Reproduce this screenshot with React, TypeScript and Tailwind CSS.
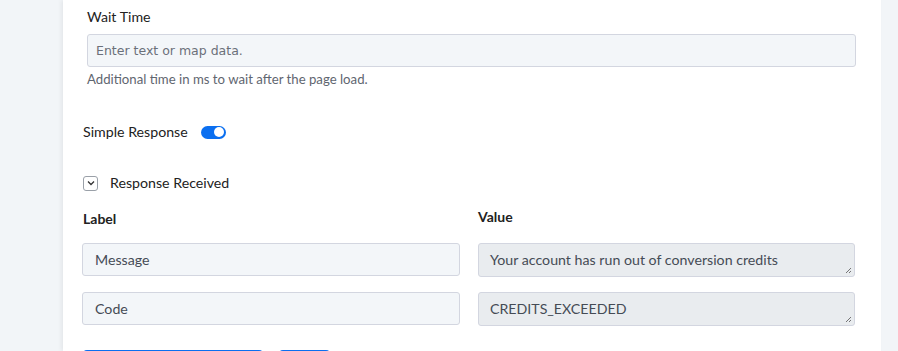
export default function App() {
  return (
    <div
      className="flex h-[351px] w-full overflow-hidden bg-[#f2f5f8]"
      style={{ fontFamily: "Lato, 'Open Sans', sans-serif" }}
    >
      <div className="ml-[63px] w-[818px] shrink-0 bg-white shadow-[-2px_0_4px_rgba(0,0,0,0.06)]">
        {/* Wait Time */}
        <div className="pl-[24px] pr-[25px] pt-[8px]">
          <div className="text-[14.2px] leading-[18px] text-[#222]">Wait Time</div>
          <input
            className="mt-[8px] block h-[33px] w-full rounded-[3px] border border-[#d3d6e0] bg-[#f3f6f9] px-[8px] text-[12.5px] text-[#555] placeholder:text-[#6b7079] outline-none"
            style={{ fontFamily: "'DejaVu Sans', Verdana, sans-serif" }}
            placeholder="Enter text or map data."
          />
          <div className="mt-[4px] text-[13.2px] leading-[16px] text-[#5f6670]">
            Additional time in ms to wait after the page load.
          </div>
        </div>

        {/* Simple Response */}
        <div className="mt-[36px] flex items-center pl-[20px]">
          <span className="text-[14.2px] leading-[18px] text-[#222]">Simple Response</span>
          <span className="ml-[13px] flex h-[13px] w-[25px] items-center justify-end rounded-full bg-[#0b6ff0] pr-[2px]">
            <span className="h-[10px] w-[10px] rounded-full bg-white" />
          </span>
        </div>

        {/* Response Received */}
        <div className="mt-[33px] flex items-center pl-[20px]">
          <span className="flex h-[15px] w-[15px] items-center justify-center rounded-[3px] border border-[#9aa0a8]">
            <svg width="8" height="6" viewBox="0 0 8 6" fill="none">
              <path d="M1 1.5 4 4.5 7 1.5" stroke="#333" strokeWidth="1.3" />
            </svg>
          </span>
          <span className="ml-[12px] text-[14.2px] leading-[18px] text-[#222]">Response Received</span>
        </div>

        {/* Label / Value */}
        <div className="mt-[18px] grid grid-cols-[378px_377px] gap-x-[18px] pl-[19px]">
          <div className="pl-[1px] text-[14px] font-bold leading-[18px] text-[#222]">Label</div>
          <div className="-mt-[2px] text-[14px] font-bold leading-[18px] text-[#222]">Value</div>

          <div className="mt-[15px] flex h-[33px] items-center rounded-[3px] border border-[#d3d6e0] bg-[#f3f6f9] px-[12px] text-[14.2px] text-[#454b55]">
            Message
          </div>
          <div className="relative mt-[15px] flex h-[34px] items-center rounded-[3px] border border-[#d3d6e0] bg-[#e9ecef] px-[11px] text-[14.2px] text-[#454b55]">
            Your account has run out of conversion credits
            <Grip />
          </div>

          <div className="mt-[15px] flex h-[33px] items-center rounded-[3px] border border-[#d3d6e0] bg-[#f3f6f9] px-[12px] text-[14.2px] text-[#454b55]">
            Code
          </div>
          <div className="relative mt-[15px] flex h-[34px] items-center rounded-[3px] border border-[#d3d6e0] bg-[#e9ecef] px-[11px] text-[14.2px] text-[#454b55]">
            CREDITS_EXCEEDED
            <Grip />
          </div>
        </div>

        {/* Buttons */}
        <div className="mt-[24px] flex gap-[16px] pl-[20px]">
          <div className="h-[32px] w-[180px] rounded-[4px] bg-[#0b6ff0]" />
          <div className="h-[32px] w-[51px] rounded-[4px] bg-[#0b6ff0]" />
        </div>
      </div>
    </div>
  );
}

function Grip() {
  return (
    <svg className="absolute bottom-[2px] right-[2px]" width="8" height="8" viewBox="0 0 8 8">
      <path d="M7 2 2 7M7 5 5 7" stroke="#666" strokeWidth="0.9" />
    </svg>
  );
}
